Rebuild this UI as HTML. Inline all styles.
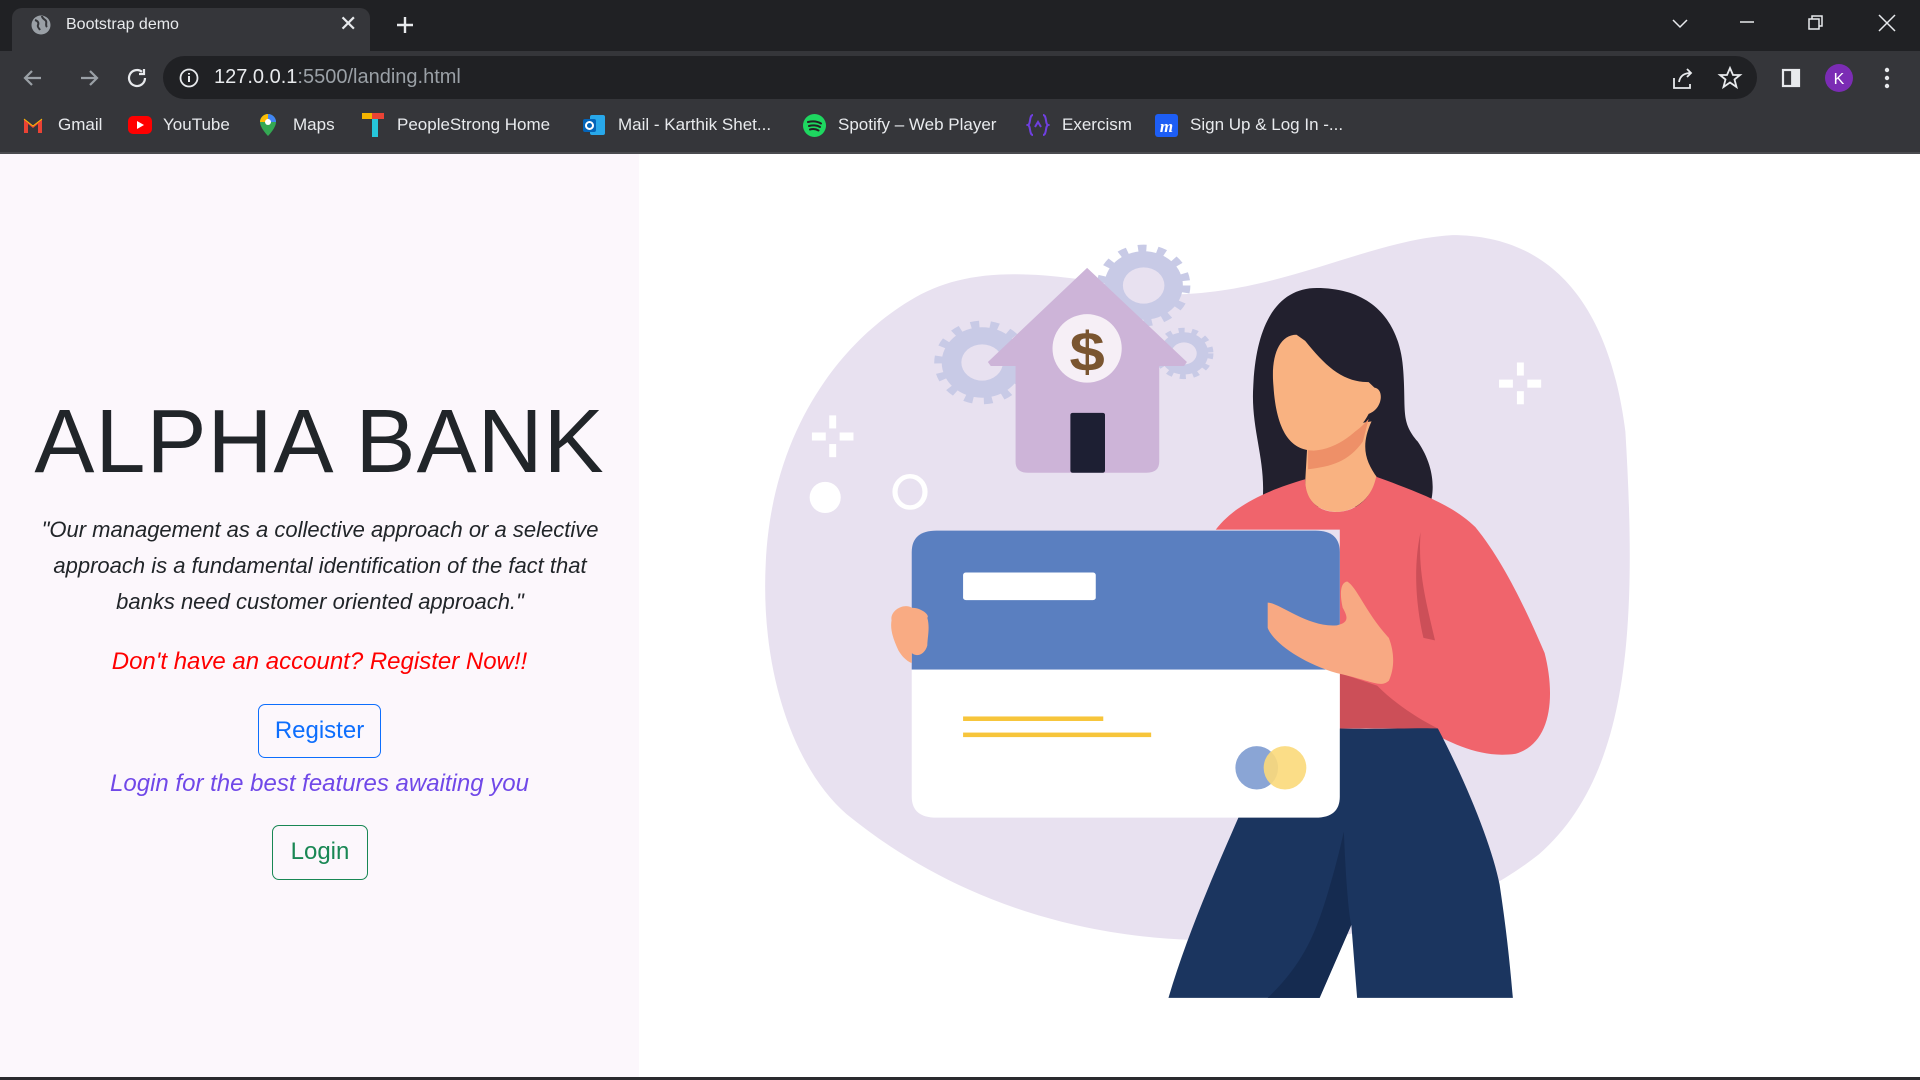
<!DOCTYPE html>
<html><head><meta charset="utf-8"><style>
*{margin:0;padding:0;box-sizing:border-box}
body{width:1920px;height:1080px;overflow:hidden;background:#fff;font-family:"Liberation Sans",sans-serif;position:relative}
.abs{position:absolute}
#tabs{left:0;top:0;width:1920px;height:51px;background:#202124}
#tab{left:12px;top:8px;width:358px;height:43px;background:#35363a;border-radius:10px 10px 0 0}
#toolbar{left:0;top:51px;width:1920px;height:103px;background:#35363a}
#omni{left:163px;top:56px;width:1594px;height:43px;background:#202124;border-radius:22px}
.bm{position:absolute;top:114px;color:#e8eaed;font-size:17px;line-height:22px;white-space:nowrap}
#sep{left:0;top:152px;width:1920px;height:2px;background:#4a4b4f}
#left{left:0;top:154px;width:639px;height:923px;background:#fcf7fc}
#bottom{left:0;top:1077px;width:1920px;height:3px;background:#2a2a2e}
h1{position:absolute;left:0;width:639px;top:392px;text-align:center;font-weight:400;font-size:90px;color:#212529;line-height:100px;letter-spacing:1px}
.q{position:absolute;left:28px;width:584px;top:512px;text-align:center;font-style:italic;font-size:22px;line-height:36px;color:#212529}
.red{position:absolute;left:0;width:639px;top:648px;text-align:center;font-style:italic;font-size:24px;color:#f00}
.pur{position:absolute;left:0;width:639px;top:770px;text-align:center;font-style:italic;font-size:24px;color:#7048e8}
.btn{position:absolute;border-radius:7px;font-size:24px;text-align:center;background:transparent}
</style></head><body>
<div id="tabs" class="abs"></div>
<div id="tab" class="abs"></div>
<svg class="abs" style="left:30px;top:14px" width="22" height="22" viewBox="0 0 22 22"><circle cx="11" cy="11" r="9.5" fill="#9aa0a6"/><path d="M5 6c3 1 4 3 3 5s1 3 2 5M12 2c0 3 3 3 4 5s-1 4 1 6" stroke="#35363a" stroke-width="2" fill="none"/></svg>
<div class="abs" style="left:66px;top:16px;color:#e8eaed;font-size:16px">Bootstrap demo</div>
<div class="abs" style="left:339px;top:11px;color:#e8eaed;font-size:22px">✕</div>
<svg class="abs" style="left:395px;top:15px" width="20" height="20"><path d="M10 2v16M2 10h16" stroke="#e8eaed" stroke-width="2.4"/></svg>
<svg class="abs" style="left:1670px;top:14px" width="240" height="20" fill="none" stroke="#e8eaed" stroke-width="1.5"><path d="M3 6l7 7 7-7"/><path d="M70 8h14"/><rect x="139" y="5" width="10" height="10"/><path d="M142 5V2h10v10h-3"/><path d="M209 1l16 16M225 1L209 17"/></svg>
<div id="toolbar" class="abs"></div>
<svg class="abs" style="left:20px;top:66px" width="130" height="24" fill="none" stroke="#9aa0a6" stroke-width="2.2"><path d="M21 12H5M12 5l-7 7 7 7"/><path d="M61 12h16M70 5l7 7-7 7"/><path d="M125 12a8 8 0 1 1-3-6.2" stroke="#e8eaed"/><path d="M124 3v5h-5" stroke="#e8eaed"/></svg>
<div id="omni" class="abs"></div>
<svg class="abs" style="left:178px;top:67px" width="22" height="22"><circle cx="11" cy="11" r="8.5" fill="none" stroke="#e8eaed" stroke-width="1.8"/><path d="M11 9v6M11 6v1.5" stroke="#e8eaed" stroke-width="2"/></svg>
<div class="abs" style="left:214px;top:66px;font-size:20px;color:#e8eaed">127.0.0.1<span style="color:#9aa0a6">:5500/landing.html</span></div>
<svg class="abs" style="left:1670px;top:64px" width="240" height="28" fill="none" stroke="#e8eaed" stroke-width="1.8"><path d="M4 14v10h16v-4M9 18c1-6 5-9 12-9M17 5l4 4-4 4"/><path d="M60 4l3 7h7l-5.5 4.5 2 7.5-6.5-4.5-6.5 4.5 2-7.5L50 11h7z"/><rect x="113" y="6" width="16" height="16" stroke-width="2.2"/><rect x="122" y="6" width="7" height="16" fill="#e8eaed"/><circle cx="169" cy="14" r="14" fill="#7b2cb4" stroke="none"/><text x="169" y="20" fill="#fff" stroke="none" font-size="16" text-anchor="middle" font-family="Liberation Sans">K</text><g fill="#e8eaed" stroke="none"><circle cx="217" cy="6" r="2.2"/><circle cx="217" cy="14" r="2.2"/><circle cx="217" cy="22" r="2.2"/></g></svg>
<svg class="abs" style="left:22px;top:115px" width="22" height="20"><path d="M2 4v14h4V9l5 4 5-4v9h4V4l-9 7z" fill="#ea4335"/><path d="M2 4l9 7 9-7" stroke="#fbbc04" stroke-width="1" fill="none"/></svg>
<div class="bm" style="left:58px">Gmail</div>
<svg class="abs" style="left:128px;top:116px" width="24" height="18"><rect width="24" height="18" rx="5" fill="#f00"/><path d="M9 5l7 4-7 4z" fill="#fff"/></svg>
<div class="bm" style="left:163px">YouTube</div>
<svg class="abs" style="left:259px;top:113px" width="18" height="24"><path d="M9 1a8 8 0 0 1 8 8c0 6-8 14-8 14S1 15 1 9a8 8 0 0 1 8-8z" fill="#34a853"/><path d="M9 1a8 8 0 0 1 8 8L9 9z" fill="#4285f4"/><path d="M1 9a8 8 0 0 1 8-8v8z" fill="#fbbc04"/><circle cx="9" cy="9" r="3" fill="#fff"/></svg>
<div class="bm" style="left:293px">Maps</div>
<svg class="abs" style="left:362px;top:113px" width="22" height="24"><rect x="0" y="0" width="10" height="6" fill="#f4b400"/><rect x="10" y="0" width="12" height="6" fill="#ea4335"/><rect x="10" y="6" width="6" height="18" fill="#26c6da"/></svg>
<div class="bm" style="left:397px">PeopleStrong Home</div>
<svg class="abs" style="left:582px;top:114px" width="24" height="22"><rect x="8" y="1" width="15" height="20" rx="2" fill="#28a8ea"/><rect x="1" y="5" width="13" height="13" rx="2" fill="#0364b8"/><circle cx="7.5" cy="11.5" r="3.5" fill="none" stroke="#fff" stroke-width="2"/></svg>
<div class="bm" style="left:618px">Mail - Karthik Shet...</div>
<svg class="abs" style="left:803px;top:114px" width="23" height="23"><circle cx="11.5" cy="11.5" r="11.5" fill="#1ed760"/><path d="M5 8c4-1 9-1 13 1.5M6 12c3-1 8-1 11 1M7 15.5c3-.8 6-.5 8.5 1" stroke="#222" stroke-width="2" fill="none" stroke-linecap="round"/></svg>
<div class="bm" style="left:838px">Spotify – Web Player</div>
<svg class="abs" style="left:1026px;top:113px" width="24" height="24" fill="none" stroke="#6f3fe0" stroke-width="2"><path d="M7 2C3 2 5 11 2 12c3 1 1 10 5 10M17 2c4 0 2 9 5 10-3 1-1 10-5 10M9 14l3-5 3 5"/></svg>
<div class="bm" style="left:1062px">Exercism</div>
<svg class="abs" style="left:1155px;top:114px" width="23" height="23"><rect width="23" height="23" rx="3" fill="#1d5ef5"/><text x="11.5" y="18" fill="#fff" font-size="17" font-style="italic" font-weight="bold" text-anchor="middle" font-family="Liberation Serif">m</text></svg>
<div class="bm" style="left:1190px">Sign Up &amp; Log In -...</div>
<div id="sep" class="abs"></div>

<div id="left" class="abs"></div>
<h1>ALPHA BANK</h1>
<div class="q">"Our management as a collective approach or a selective approach is a fundamental identification of the fact that banks need customer oriented approach."</div>
<div class="red">Don't have an account? Register Now!!</div>
<div class="btn" style="left:258px;top:704px;width:123px;height:54px;border:1.5px solid #0d6efd;color:#0d6efd;line-height:51px">Register</div>
<div class="pur">Login for the best features awaiting you</div>
<div class="btn" style="left:272px;top:825px;width:96px;height:55px;border:1.5px solid #198754;color:#198754;line-height:52px">Login</div>

<svg class="abs" style="left:760px;top:220px" width="900" height="790" viewBox="0 0 1560 1569" preserveAspectRatio="none">
<path d="M10 680C20 430 130 250 260 160 360 90 480 95 700 148 900 150 1050 40 1200 30 1360 30 1470 150 1500 420 1520 800 1510 1100 1350 1260 1150 1440 900 1440 750 1430 500 1420 300 1320 150 1180 60 1090 0 900 10 680Z" fill="#e8e1f0"/>
<g fill="#c8cae6">
<circle cx="385" cy="283" r="70"/><circle cx="665" cy="130" r="68"/><circle cx="735" cy="265" r="42"/>
<g stroke="#c8cae6" stroke-width="22" stroke-dasharray="14 18"><circle cx="385" cy="283" r="72" fill="none"/><circle cx="665" cy="130" r="70" fill="none"/></g>
<g stroke="#c8cae6" stroke-width="14" stroke-dasharray="10 12"><circle cx="735" cy="265" r="44" fill="none"/></g>
</g>
<circle cx="385" cy="283" r="36" fill="#e8e1f0"/><circle cx="665" cy="130" r="36" fill="#e8e1f0"/><circle cx="735" cy="265" r="22" fill="#e8e1f0"/>
<path d="M567 95L395 282 400 290H443V480Q443 502 465 502H670Q692 502 692 480V290H735L740 282Z" fill="#cdb4d8"/>
<ellipse cx="567" cy="255" rx="60" ry="68" fill="#f6eff6"/>
<text x="567" y="300" text-anchor="middle" font-size="110" font-weight="bold" fill="#7a5530" font-family="Liberation Sans">$</text>
<rect x="538" y="383" width="60" height="119" rx="4" fill="#1d1f33"/>
<g fill="#fff"><rect x="120" y="388" width="12" height="26"/><rect x="120" y="445" width="12" height="26"/><rect x="90" y="422" width="24" height="16"/><rect x="138" y="422" width="24" height="16"/>
<rect x="1312" y="283" width="12" height="26"/><rect x="1312" y="340" width="12" height="26"/><rect x="1281" y="317" width="24" height="16"/><rect x="1330" y="317" width="24" height="16"/>
<ellipse cx="113" cy="551" rx="27" ry="31"/></g>
<ellipse cx="260" cy="540" rx="26" ry="31" fill="none" stroke="#fff" stroke-width="9"/>
<path d="M965 135C1060 135 1110 200 1115 300 1120 380 1110 400 1140 440 1170 490 1170 540 1160 570L870 570C880 480 850 420 855 330 860 200 900 135 965 135Z" fill="#22202e"/>
<path d="M950 420L1060 400C1040 450 1050 480 1070 512 1060 550 1035 578 1000 580 965 578 945 555 945 520Z" fill="#f9b281"/>
<path d="M950 455C990 450 1030 430 1055 395L1045 440C1020 480 990 490 950 495Z" fill="#ee9068"/>
<path d="M930 228C900 228 885 270 890 330 895 420 920 458 960 458 1000 455 1040 420 1055 385 1080 375 1082 335 1065 333L1055 322C1010 322 980 290 945 240Z" fill="#f9b281"/>
<path d="M790 615C820 570 870 540 945 515 945 560 970 580 1000 580 1040 578 1062 545 1068 510 1140 540 1200 565 1240 610 1290 680 1330 780 1360 860 1380 950 1370 1040 1310 1060 1250 1070 1200 1040 1150 1010L1005 1010V615Z" fill="#f0646c"/>
<path d="M1005 900L1070 925C1100 960 1140 990 1175 1010L1005 1010Z" fill="#cc4f58"/>
<path d="M1145 620C1130 700 1140 780 1150 830L1170 835C1155 760 1140 700 1145 620Z" fill="#cc4f58"/>
<path d="M830 1185L1005 1010C1080 1012 1140 1008 1175 1010 1230 1130 1270 1250 1282 1320 1295 1420 1300 1480 1305 1545H1035L1025 1400 970 1545H708C740 1420 790 1290 830 1185Z" fill="#1b355f"/>
<path d="M1012 1215C1015 1300 1020 1380 1025 1400L970 1545H880C940 1480 960 1420 975 1370 995 1300 1005 1250 1012 1215Z" fill="#152b50"/>
<path d="M263 893V660Q263 617 306 617H963Q1005 617 1005 660V893Z" fill="#5a7fc0"/>
<path d="M263 893H1005V1145Q1005 1187 963 1187H306Q263 1187 263 1145Z" fill="#fff"/>
<rect x="352" y="700" width="230" height="55" rx="5" fill="#fff"/>
<rect x="352" y="986" width="243" height="9" fill="#f7c53b"/><rect x="352" y="1018" width="326" height="9" fill="#f7c53b"/>
<ellipse cx="861" cy="1088" rx="37" ry="43" fill="#8aa5d5"/><ellipse cx="910" cy="1088" rx="37" ry="43" fill="#fbd97a" opacity=".9"/>
<path d="M263 770C250 760 225 775 228 795 225 815 232 835 240 855 250 875 263 880 263 880Z M263 770C280 770 295 785 290 790 295 810 290 830 290 845 285 865 270 868 263 860Z" fill="#f9ab83"/>
<path d="M880 760C900 760 950 810 1000 805 1020 800 1020 790 1010 770 1005 745 1005 720 1018 718 1035 730 1050 780 1090 830 1100 860 1100 890 1090 915 1075 930 1060 915 1000 900 940 880 890 840 880 810 880 790 880 760Z" fill="#f8a983"/>
</svg>
<div id="bottom" class="abs"></div>
</body></html>
